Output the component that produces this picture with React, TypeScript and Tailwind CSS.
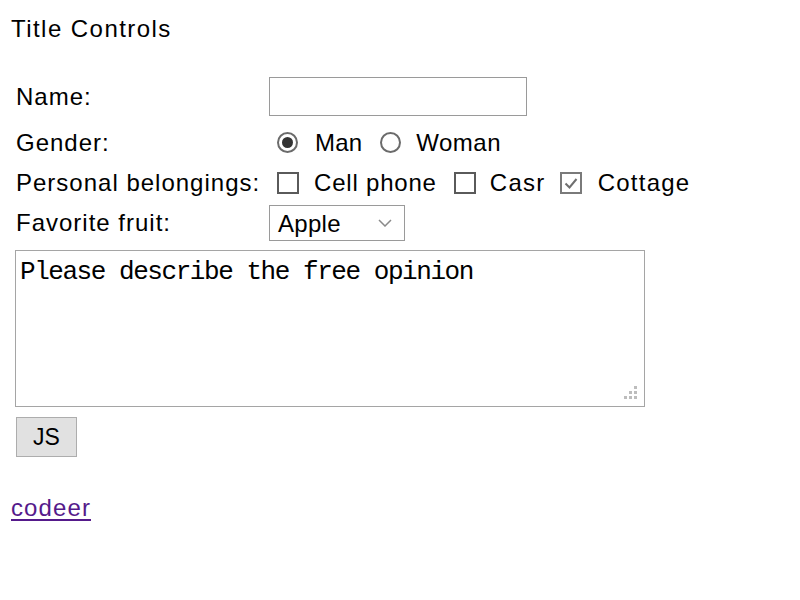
import React from "react";

const sans = { fontFamily: '"Liberation Sans", Arial, sans-serif' };

function Radio({ checked }: { checked?: boolean }) {
  return (
    <span className="w-[21px] h-[21px] rounded-full border-[2px] border-[#6b6b6b] bg-white flex items-center justify-center shrink-0">
      {checked && <span className="w-[11px] h-[11px] rounded-full bg-[#333333]" />}
    </span>
  );
}

function Check({ checked }: { checked?: boolean }) {
  return (
    <span
      className={
        "w-[22px] h-[22px] border-[2px] bg-white flex items-center justify-center shrink-0 " +
        (checked ? "border-[#7a7a7a]" : "border-[#5a5a5a]")
      }
    >
      {checked && (
        <svg width="16" height="16" viewBox="0 0 16 16">
          <path d="M2.5 8.5 L6.5 12.5 L13.5 4" fill="none" stroke="#6f6f6f" strokeWidth="2" />
        </svg>
      )}
    </span>
  );
}

export default function App() {
  return (
    <div className="bg-white w-[800px] h-[600px] text-black" style={sans}>
      <div className="pl-[11px] pt-[15px] h-[43px] text-[24px] leading-[28px] tracking-[1.45px]">
        Title Controls
      </div>
      <div className="mt-[34px] pl-[16px] flex flex-col text-[24px] leading-[28px] tracking-[1px]">
        <div className="h-[39px] flex items-center">
          <div className="w-[253px]">Name:</div>
          <div className="w-[258px] h-[39px] border border-[#9a9a9a] bg-white" />
        </div>
        <div className="mt-[5px] pt-[2px] h-[41px] flex items-center">
          <div className="w-[253px]">Gender:</div>
          <div className="flex items-center pl-[8px] tracking-[0.2px]">
            <Radio checked />
            <span className="ml-[17px]">Man</span>
            <span className="ml-[18px]"><Radio /></span>
            <span className="ml-[15px] tracking-[0.5px]">Woman</span>
          </div>
        </div>
        <div className="h-[40px] pt-[2px] flex items-center">
          <div className="w-[253px]">Personal belongings:</div>
          <div className="flex items-center pl-[8px] tracking-[0.8px]">
            <Check />
            <span className="ml-[15px]">Cell phone</span>
            <span className="ml-[17px]"><Check /></span>
            <span className="ml-[14px] tracking-[1.3px]">Casr</span>
            <span className="ml-[14px]"><Check checked /></span>
            <span className="ml-[16px] tracking-[1.25px]">Cottage</span>
          </div>
        </div>
        <div className="mt-[3px] h-[36px] flex items-center">
          <div className="w-[253px]">Favorite fruit:</div>
          <div className="w-[136px] h-[36px] border border-[#9a9a9a] bg-white flex items-center pl-[8px] pr-[12px] justify-between">
            <span className="tracking-[0.3px] pt-[2px]">Apple</span>
            <svg width="14" height="8" viewBox="0 0 14 8">
              <path d="M1 1 L7 7 L13 1" fill="none" stroke="#8a8a8a" strokeWidth="1.5" />
            </svg>
          </div>
        </div>
      </div>
      <div className="ml-[15px] mt-[9px] w-[630px] h-[157px] border border-[#a5a5a5] bg-white relative">
        <div
          className="pl-[4px] pt-[6px] text-[26px] leading-[30px] tracking-[-1.45px]"
          style={{ fontFamily: '"Liberation Mono", "Courier New", monospace' }}
        >
          Please describe the free opinion
        </div>
        <svg className="absolute right-[6px] bottom-[6px]" width="14" height="14" viewBox="0 0 14 14">
          <rect x="10" y="0" width="3" height="3" fill="#bdbdbd" />
          <rect x="5" y="5" width="3" height="3" fill="#bdbdbd" />
          <rect x="10" y="5" width="3" height="3" fill="#bdbdbd" />
          <rect x="0" y="10" width="3" height="3" fill="#bdbdbd" />
          <rect x="5" y="10" width="3" height="3" fill="#bdbdbd" />
          <rect x="10" y="10" width="3" height="3" fill="#bdbdbd" />
        </svg>
      </div>
      <div className="ml-[16px] mt-[10px] w-[61px] h-[40px] border border-[#adadad] bg-[#e1e1e1] flex items-center justify-center text-[23px] leading-[28px]">
        JS
      </div>
      <div className="pl-[11px] mt-[37px] text-[24px] leading-[28px] tracking-[1.1px]">
        <a href="#" className="text-[#551a8b] underline decoration-[2px] underline-offset-[3px]">codeer</a>
      </div>
    </div>
  );
}
